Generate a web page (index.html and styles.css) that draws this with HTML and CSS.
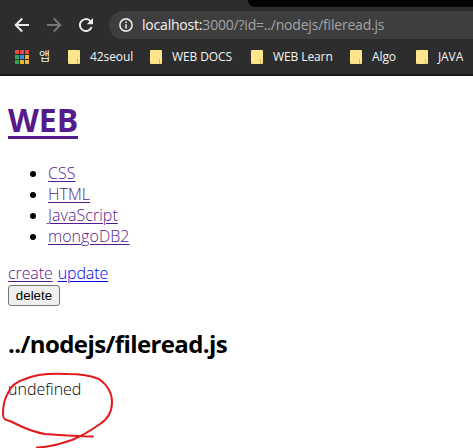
FILE: index.html
```html
<!DOCTYPE html>
<html lang="ko">
<head>
<meta charset="utf-8">
<title>WEB</title>
<link rel="stylesheet" href="styles.css">
</head>
<body>
<header class="browser">
  <div class="tabs"><div class="strip"></div></div>
  <div class="toolbar">
    <svg class="nav" width="16" height="16" viewBox="0 0 16 16"><path d="M15 8H2M8.2 1.5L1.7 8l6.5 6.5"/></svg>
    <svg class="nav off" width="16" height="16" viewBox="0 0 16 16"><path d="M1 8h13M7.8 1.5L14.3 8l-6.5 6.5"/></svg>
    <svg class="nav" width="16" height="16" viewBox="0 0 16 16"><path d="M13.6 10A6 6 0 1 1 12 3.7L13.3 5"/><path class="fill" d="M15 1v6.2H8.8z"/></svg>
    <div class="address">
      <svg class="info" width="14" height="14" viewBox="0 0 14 14"><circle cx="7" cy="7" r="6.1"/><path d="M7 6.2v4.3M7 3.4V5"/></svg>
      <span class="url"><b>localhost:</b>3000/?id=../nodejs/fileread.js</span>
    </div>
  </div>
  <nav class="bookmarks">
    <svg class="apps" width="14" height="14" viewBox="0 0 14 14">
      <path fill="#e34b3d" d="M0 0h4v4H0zM5 0h4v4H5zM10 0h4v4h-4z"/>
      <path fill="#36a257" d="M0 5h4v4H0zM0 10h4v4H0z"/>
      <path fill="#438af0" d="M5 5h4v4H5z"/>
      <path fill="#eeb72e" d="M10 5h4v4h-4zM5 10h4v4H5zM10 10h4v4h-4z"/>
    </svg>
    <span class="mark app">앱</span>
    <span class="folder"></span><span class="mark seoul">42seoul</span>
    <span class="folder"></span><span class="mark docs">WEB DOCS</span>
    <span class="folder"></span><span class="mark learn">WEB Learn</span>
    <span class="folder"></span><span class="mark algo">Algo</span>
    <span class="folder"></span><span class="mark">JAVA</span>
  </nav>
</header>
<main>
  <h1><a href="#">WEB</a></h1>
  <ul>
    <li><a class="css" href="#">CSS</a></li>
    <li><a class="html" href="#">HTML</a></li>
    <li><a class="js" href="#">JavaScript</a></li>
    <li><a class="mongo" href="#">mongoDB2</a></li>
  </ul>
  <div class="actions"><a class="create" href="#">create</a><a class="update" href="#">update</a></div>
  <button type="button">delete</button>
  <h2>../nodejs/fileread.js</h2>
  <p>undefined</p>
</main>
<svg class="scribble" width="120" height="80" viewBox="0 368 120 80"><path d="M8 393C11 386 18 381 25 379C36 374 52 373 68 374C82 374 94 377 99 379C106 384 112 392 112 402C112 412 108 419 100 424C90 431 82 436 72 440C62 443 55 447 37 447.500M8 393C5 398 3 406 3 414C3 419 5 420 10 421C20 426 31 432 45 434C60 435 75 436 93 436.500"/></svg>
</body>
</html>
```
FILE: styles.css
```css
* { box-sizing: border-box; }
body { margin: 0; width: 473px; height: 448px; overflow: hidden; position: relative; background: #fff; color: #000; font-family: "Open Sans", "Noto Sans CJK KR", sans-serif; }
.browser { height: 76px; background: #2d2d2e; border-bottom: 2px solid #1b1719; overflow: hidden; }
.tabs { height: 10px; display: flex; justify-content: flex-end; }
.strip { width: 225px; height: 7px; background: #020205; border-bottom-left-radius: 7px; }
.toolbar { height: 30px; display: flex; align-items: center; padding-left: 14px; gap: 16px; }
.nav { flex: none; fill: none; stroke: #e9e9e9; stroke-width: 2; }
.nav.off { stroke: #777; }
.nav .fill { fill: #e9e9e9; stroke: none; }
.address { flex: 1; height: 28px; margin-left: -1px; padding-left: 10px; display: flex; align-items: center; gap: 9px; background: #3e3e3f; border-radius: 14px 0 0 14px; }
.info { flex: none; fill: none; stroke: #e4e4e4; stroke-width: 1.600; }
.url { font-size: 14px; line-height: 20px; color: #a4a4a4; white-space: nowrap; letter-spacing: -.2px; }
.url b { font-weight: 400; color: #f2f2f2; }
.bookmarks { height: 34px; display: flex; align-items: center; padding-left: 15px; white-space: nowrap; }
.apps { flex: none; }
.mark { flex: none; font-size: 12px; line-height: 18px; color: #f4f4f4; letter-spacing: -.1px; }
.folder { flex: none; width: 12px; height: 14px; margin-right: 10px; background: linear-gradient(#d9b95e, #d9b95e) right 2px bottom 0 / 1px 5px no-repeat, #fde58c; border-radius: 1px; }
.app { width: 29px; margin-left: 10px; margin-right: 0; }
.seoul { width: 60px; }
.docs { width: 79px; }
.learn { width: 77px; }
.algo { width: 44px; }
main { padding: 0 8px; }
h1 { margin: 22px 0 22px; font-size: 32px; line-height: 43px; letter-spacing: -.1px; }
a { color: #551a8b; text-underline-offset: 2px; text-decoration-thickness: 1px; }
h1 a { text-decoration-thickness: 3px; text-underline-offset: 4px; }
ul { margin: 0 0 16px; padding-left: 40px; }
li, .actions, p { font-size: 16px; line-height: 21px; font-weight: 300; }
li { letter-spacing: .05px; }
.actions { display: flex; gap: 5px; height: 22px; letter-spacing: -.1px; }
.update { color: #0000ee; }
button { display: block; width: 52px; height: 21px; padding: 0; border: 1px solid #767676; border-radius: 3px; background: #efefef; font: 13.333px/17px "Liberation Sans", sans-serif; color: #000; }
h2 { margin: 22px 0 19px; font-size: 24px; line-height: 32px; letter-spacing: -.6px; }
p { margin: 0; }
.scribble { position: absolute; left: 0; top: 368px; fill: none; stroke: #e21a1c; stroke-width: 2; stroke-linecap: round; stroke-linejoin: round; }
```
